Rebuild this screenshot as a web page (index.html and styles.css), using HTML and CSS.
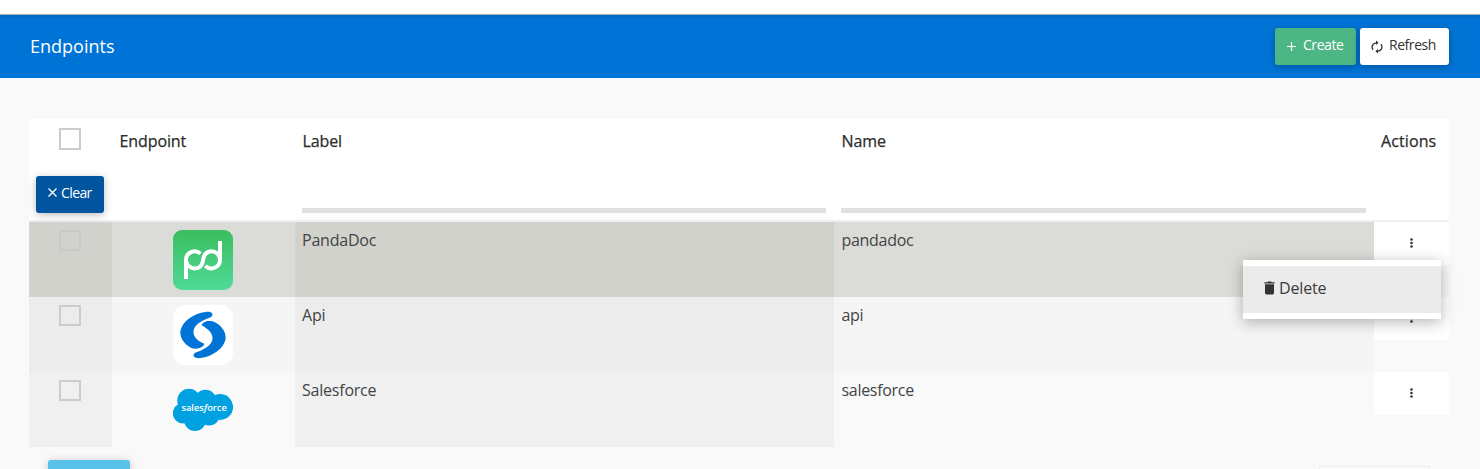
FILE: index.html
```html
<!DOCTYPE html>
<html lang="en">
<head>
<meta charset="utf-8">
<title>Endpoints</title>
<link rel="stylesheet" href="styles.css">
</head>
<body>
<div class="topbar"></div>
<header class="page-header">
  <h1 class="title">Endpoints</h1>
  <div class="toolbar">
    <button class="btn create"><svg width="9" height="9" viewBox="0 0 9 9"><path d="M4.5 0v9M0 4.5h9" stroke="currentColor" stroke-width="1.2"/></svg><span>Create</span></button>
    <button class="btn refresh"><svg width="12" height="14" viewBox="0 0 12 14" fill="none" stroke="currentColor" stroke-width="1.3"><path d="M2 9.8C-.1 6.6 1.7 2.9 5.6 2.8M10 4.2c2.1 3.2.3 6.9-3.6 7"/><path d="M5 .5 7.6 2.8 5 5.1zM7 8.900 4.4 11.2 7 13.5z" fill="currentColor" stroke="none"/></svg><span>Refresh</span></button>
  </div>
</header>
<main class="content">
  <div class="table">
    <div class="row head">
      <div class="cell"><span class="check"></span><button class="btn clear"><svg width="9" height="9" viewBox="0 0 9 9"><path d="M.5 .5l8 8M8.500 .5l-8 8" stroke="currentColor" stroke-width="1.3"/></svg><span>Clear</span></button></div>
      <div class="cell"><span class="label">Endpoint</span></div>
      <div class="cell filter"><span class="label">Label</span><span class="line"></span></div>
      <div class="cell filter"><span class="label">Name</span><span class="line"></span></div>
      <div class="cell"><span class="label wide">Actions</span></div>
    </div>
    <div class="row selected">
      <div class="cell shade"><span class="check"></span></div>
      <div class="cell logo"><svg width="60" height="60" viewBox="0 0 60 60"><defs><linearGradient id="green" x2="0" y2="1"><stop stop-color="#3abd5e"/><stop offset="1" stop-color="#50da98"/></linearGradient></defs><rect width="60" height="60" rx="9" fill="url(#green)"/><g fill="none" stroke="#fff" stroke-width="4"><path d="M13 49V30A8.600 8.600 0 0 1 27.500 23.700M13.200 31A8.600 8.600 0 0 0 21.700 38.500C26.500 38.500 29.300 35.200 30 30.500C30.700 25 33.500 21.300 38.500 21.300A8.600 8.600 0 0 1 47 29M47 11V30A8.600 8.600 0 0 1 32.300 35.800"/></g></svg></div>
      <div class="cell shade"><span class="text">PandaDoc</span></div>
      <div class="cell name"><span class="text tight">pandadoc</span></div>
      <div class="action"><svg width="3" height="10" viewBox="0 0 3 10"><circle cx="1.500" cy="1.500" r="1.300"/><circle cx="1.500" cy="5" r="1.300"/><circle cx="1.500" cy="8.500" r="1.300"/></svg></div>
    </div>
    <div class="row odd">
      <div class="cell shade"><span class="check"></span></div>
      <div class="cell logo"><svg width="60" height="60" viewBox="0 0 60 60"><rect width="60" height="60" rx="13" fill="#fff"/><g fill="#0074d6"><path d="M39 8.200C40.200 10.200 38.800 12 36.500 12.800C27 16 21.200 20.500 20.500 26C20 31.500 24 35.500 31.300 38.800C30.500 42.500 23.500 45.500 17.500 42.500C10 38.300 6.500 31.500 7.500 25.500C9.500 16.500 20 8.500 32.500 7C35.500 6.600 38 7.200 39 8.200Z"/><path d="M21 51.800C19.800 49.800 21.200 48 23.500 47.200C33 44 38.800 39.500 39.500 34C40 28.500 36 24.500 28.700 20.200C29.500 16.500 36.500 14.500 42.500 17.500C50 21.700 53.500 28.500 52.500 34.500C50.500 43.500 40 51.500 27.500 53C24.500 53.400 22 52.800 21 51.800Z"/></g></svg></div>
      <div class="cell shade"><span class="text">Api</span></div>
      <div class="cell name"><span class="text tight">api</span></div>
      <div class="action"><svg width="3" height="10" viewBox="0 0 3 10"><circle cx="1.500" cy="1.500" r="1.300"/><circle cx="1.500" cy="5" r="1.300"/><circle cx="1.500" cy="8.500" r="1.300"/></svg></div>
    </div>
    <div class="row even">
      <div class="cell shade"><span class="check"></span></div>
      <div class="cell logo"><svg width="60" height="60" viewBox="0 0 60 60"><g fill="#00a1e0"><circle cx="16" cy="20.500" r="11.700"/><circle cx="32.500" cy="20.700" r="10.900"/><circle cx="47.200" cy="27" r="12.900"/><circle cx="10" cy="33.200" r="10.200"/><circle cx="22" cy="40" r="11"/><circle cx="36" cy="34.500" r="11"/><path d="M14 18h30v20H14zM20 13l10 0v6H20zM5 20h8v8H5z"/></g><text class="sf" x="8.4" y="30.5" textLength="45.500" lengthAdjust="spacingAndGlyphs">sales<tspan font-style="italic">f</tspan>orce</text></svg></div>
      <div class="cell shade"><span class="text">Salesforce</span></div>
      <div class="cell name"><span class="text tight">salesforce</span></div>
      <div class="action"><svg width="3" height="10" viewBox="0 0 3 10"><circle cx="1.500" cy="1.500" r="1.300"/><circle cx="1.500" cy="5" r="1.300"/><circle cx="1.500" cy="8.500" r="1.300"/></svg></div>
    </div>
  </div>
  <div class="footer"><span class="page-button"></span><span class="page-size"></span></div>
</main>
<div class="menu"><div class="menu-item"><svg width="11" height="14" viewBox="0 0 11 14"><path d="M.3 1.200h3L4 .4h3l.7.8h3v1.300H.3zM1 3.300h9v8.700q0 1.400-1.400 1.400H2.400Q1 13.400 1 12z" fill="#333"/></svg><span class="delete">Delete</span></div></div>
</body>
</html>
```
FILE: styles.css
```css
* { box-sizing: border-box; }
html, body { height: 100%; }
body { margin: 0; overflow: hidden; background: #f9f9f9; color: #444; font: 16px/24px "Open Sans", "Noto Sans", sans-serif; position: relative; display: flex; flex-direction: column; }
svg { display: block; flex: none; }
.topbar { flex: none; height: 15px; background: #fff; border-bottom: 1px solid #aab0b3; }
.page-header { flex: none; height: 63px; padding: 0 31px 0 30px; background: linear-gradient(#006ac2, #0074d6 5px); display: flex; justify-content: space-between; align-items: center; color: #fff; }
.title { margin: 0 0 2px; font-size: 18px; font-weight: 400; line-height: 24px; }
.toolbar { display: flex; gap: 4px; }
.btn { height: 37px; border: 0; border-radius: 3px; padding: 0 0 4px 12px; font: 14px/20px "Open Sans", sans-serif; letter-spacing: -.45px; color: #fff; display: flex; align-items: center; box-shadow: 0 2px 8px rgba(0, 0, 0, .26); }
.create { width: 81px; background: #4db685; gap: 7px; }
.create svg { margin-top: 4px; }
.refresh { width: 89px; background: #fff; color: #333; gap: 5px; padding-left: 11px; }
.refresh svg { margin-top: 4px; }
.refresh span { padding-left: 1px; }
.clear { width: 68px; margin: 26px 0 0 7px; background: #00559e; gap: 4px; letter-spacing: -.6px; }
.content { flex: 1; min-height: 0; overflow: hidden; padding: 41px 31px 0 29px; }
.row { display: grid; grid-template-columns: 83px 183px 539px 540px 75px; height: 75px; }
.head { height: 103px; background: #fff; border-bottom: 2px solid #efefef; }
.cell { padding: 6px 8px 0 7px; }
.cell:first-child { padding: 8px 0 0; }
.check { display: block; width: 22px; height: 21px; margin-left: 30px; border: 2px solid #ccc; }
.head .cell { padding-top: 10px; }
.head .cell:first-child { padding-top: 9px; }
.head .check { height: 22px; }
.filter { display: flex; flex-direction: column; justify-content: space-between; padding-bottom: 7px; }
.label { display: inline-block; padding-left: .5px; color: #2c2c2c; letter-spacing: -.1px; -webkit-text-stroke: .25px #2c2c2c; }
.wide { padding-left: 0; letter-spacing: .1px; }
.line { height: 5px; background: #e0e0e0; }
.text { display: inline-block; letter-spacing: -.22px; }
.tight { padding-left: .5px; letter-spacing: -.3px; }
.logo { padding: 8px 0 0 61px; }
.selected { background: linear-gradient(90deg, #dbdcd7 1345px, #f9f9f9 1345px); }
.selected .shade { background: #d1d2cc; }
.selected .check { border-color: #c9cac8; }
.odd { background: linear-gradient(90deg, #f5f5f5 1345px, #f9f9f9 1345px); }
.odd .shade { background: #ececec; }
.even .shade { background: #f0f0f0; }
.action { height: 43px; background: #fff; display: flex; justify-content: center; padding-top: 16px; fill: #333; }
.sf { font: 600 9.5px "Open Sans", sans-serif; fill: #fff; }
.footer { height: 28px; overflow: hidden; display: flex; justify-content: space-between; padding: 13px 19px 0; }
.page-button { width: 82px; height: 15px; border-radius: 3px 3px 0 0; background: #59c1ea; box-shadow: 0 1px 8px rgba(0, 0, 0, .2); }
.page-size { width: 111px; height: 9px; margin-top: 6px; background: #fafafa; border: 1px solid #ececec; border-bottom: 0; }
.menu { position: absolute; left: 1243px; top: 260px; width: 198px; height: 59px; padding: 6px 0; background: #fff; box-shadow: 0 3px 14px rgba(0, 0, 0, .3); }
.menu-item { height: 47px; padding: 0 21px 3px; background: #ebebeb; display: flex; align-items: center; gap: 4px; color: #3c3c3c; }
.delete { letter-spacing: -.15px; }
```
